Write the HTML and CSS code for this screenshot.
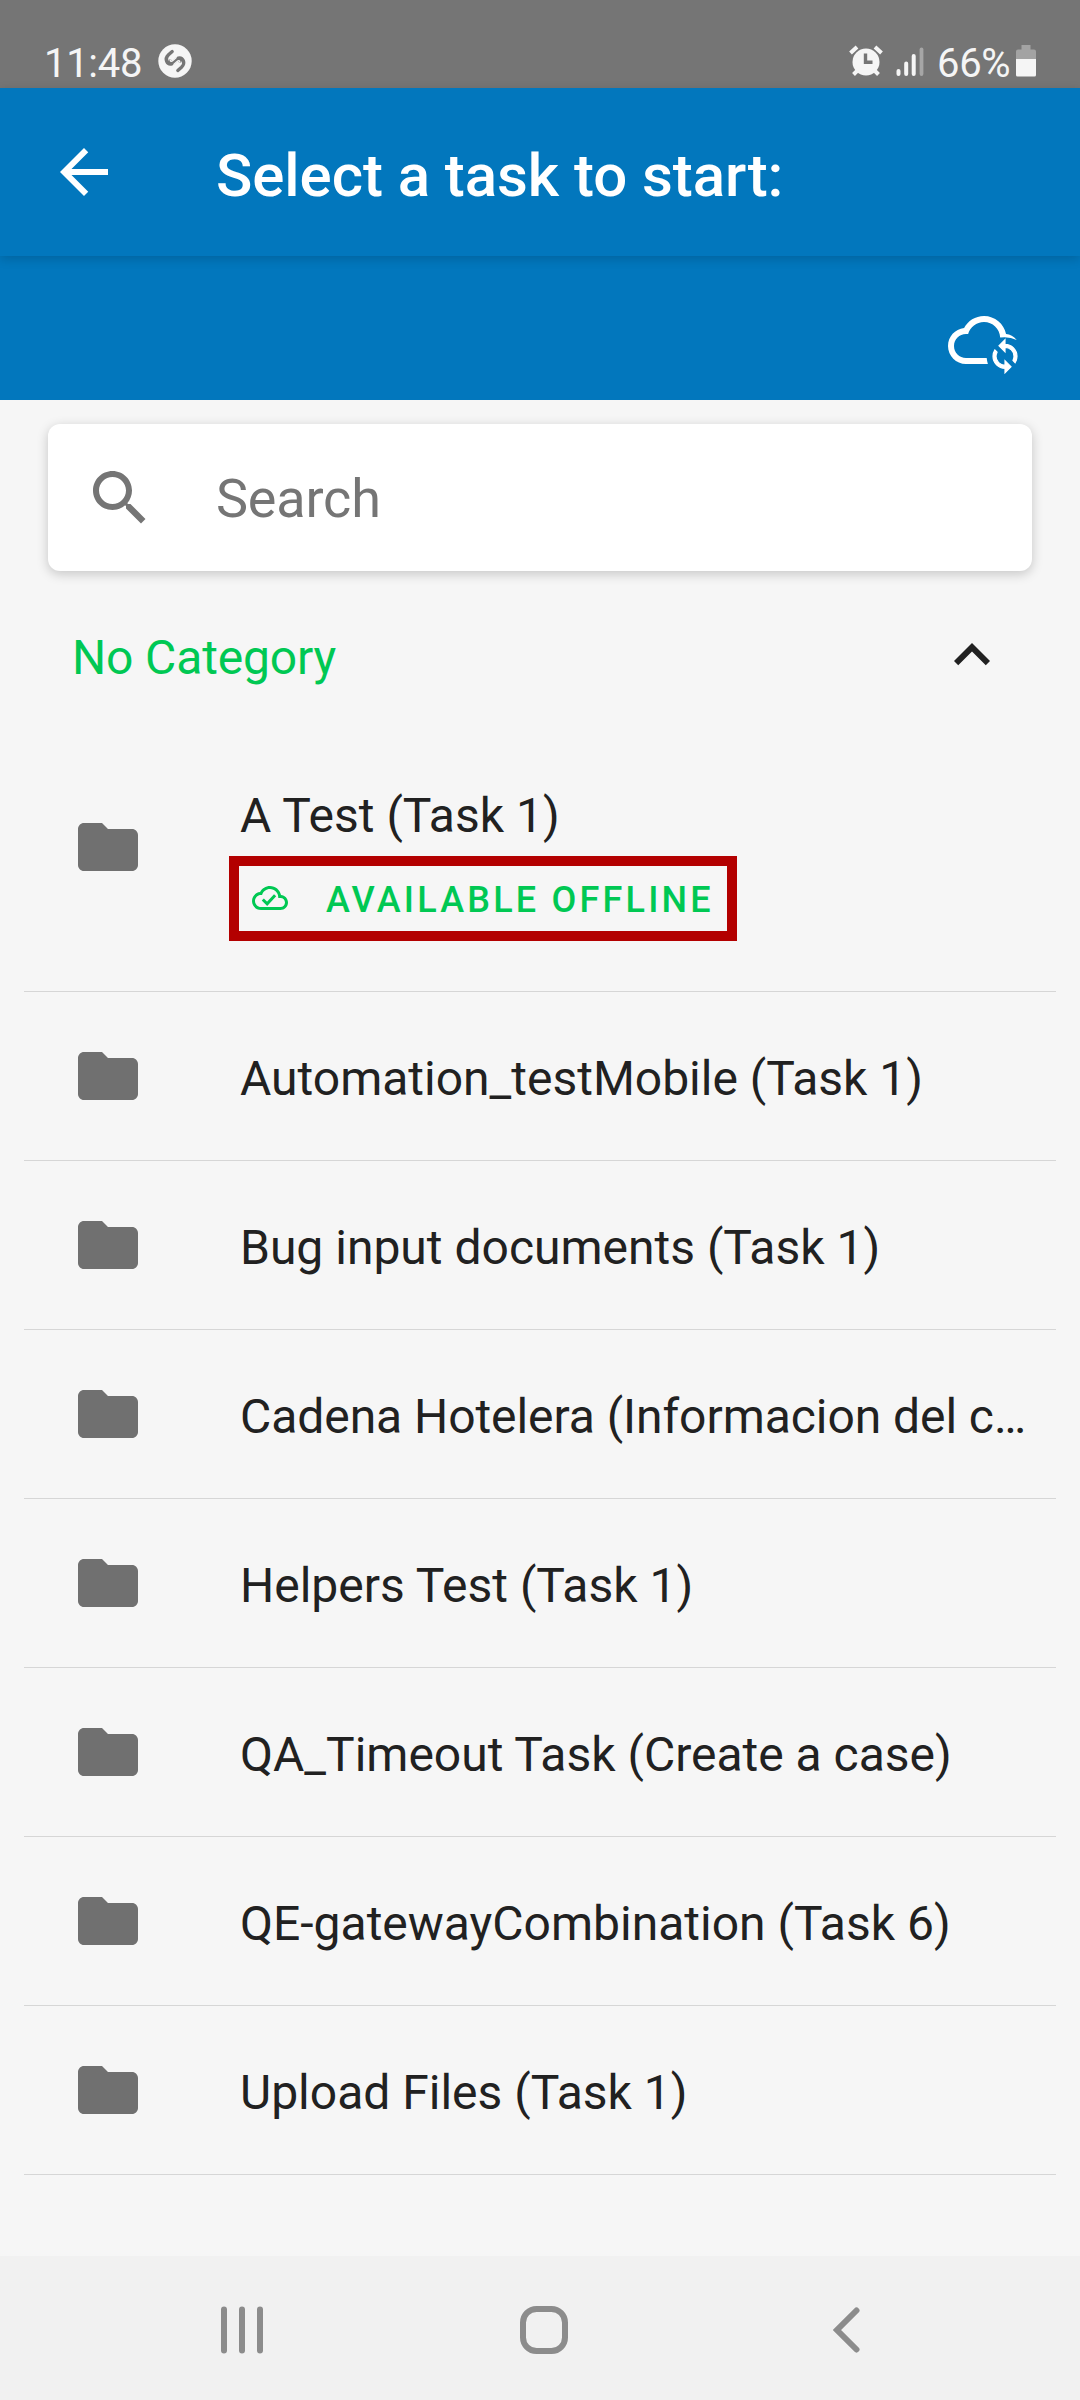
FILE: index.html
```html
<!DOCTYPE html>
<html lang="en">
<head>
<meta charset="utf-8">
<title>Select a task to start</title>
<link rel="stylesheet" href="styles.css">
</head>
<body>
<svg class="defs" width="0" height="0" aria-hidden="true">
  <symbol id="folder" viewBox="0 0 24 24"><path d="M10 4H4c-1.100 0-2 .9-2 2v12c0 1.100.9 2 2 2h16c1.100 0 2-.9 2-2V8c0-1.100-.9-2-2-2h-8z"/></symbol>
</svg>
<div class="screen">
  <div class="statusbar">
    <span class="clock">11:48</span>
    <svg class="notif" width="34" height="34" viewBox="0 0 34 34"><circle cx="17" cy="17" r="16.700" fill="#f5f5f5"/><path d="M14.200 7.500L10.500 10.800C6 15 9 21 13.800 20C15.500 19.600 17.500 17.500 18.500 16.500C20.500 14.700 22 15.500 22 17M19.800 26.500L23.500 23.200C28 19 25 13 20.200 14C18.500 14.400 16.500 16.500 15.500 17.500C13.500 19.300 12 18.500 12 17" fill="none" stroke="#757575" stroke-width="3.300" stroke-linecap="round"/><path d="M12.300 15.500C12 18.200 13.800 17.500 15.200 16.200L18.500 13.200" fill="none" stroke="#f5f5f5" stroke-width="1.400"/><path d="M21.700 18.500C22 15.800 20.200 16.500 18.800 17.800L15.500 20.800" fill="none" stroke="#f5f5f5" stroke-width="1.400"/></svg>
    <span class="spacer"></span>
    <svg class="alarm" width="34" height="32" viewBox="0 0 34 32"><g fill="none" stroke="#f5f5f5"><path d="M1.500 8L8 2M26 2L32.500 8" stroke-width="4"/><path d="M4.500 29.500L9 25M29.500 29.500L25 25" stroke-width="4"/></g><circle cx="17" cy="17" r="13.500" fill="#f5f5f5"/><path d="M16.500 8.500V17.300H23.500" fill="none" stroke="#757575" stroke-width="3.400"/></svg>
    <svg class="signal" width="28" height="32" viewBox="0 0 28 32"><g fill="none" stroke="#f5f5f5" stroke-width="4" stroke-linecap="round"><path d="M2.500 26V29M10.200 18.500V29M17.700 11V29"/><path d="M25.500 4.500V29" stroke="#a6a6a6" stroke-width="3.800"/></g></svg>
    <span class="percent">66%</span>
    <svg class="battery" width="20" height="32" viewBox="0 0 20 32"><path d="M5.500 0h9v4.500H18q2 0 2 2V14H0V6.500q0-2 2-2h3.500z" fill="#a3a3a3"/><path d="M0 14h20v16q0 1.500-1.500 1.500h-17Q0 31.500 0 30z" fill="#f5f5f5"/></svg>
  </div>
  <header class="appbar">
    <svg class="back" width="72" height="72" viewBox="0 0 24 24"><path d="M20 11H7.830l5.590-5.590L12 4l-8 8 8 8 1.410-1.410L7.830 13H20z" fill="#fff"/></svg>
    <h1>Select a task to start:</h1>
  </header>
  <div class="toolbar">
    <svg class="sync" width="72" height="60" viewBox="0 0 72 60" fill="#fff"><path transform="translate(0 -11) scale(3)" d="M12.900 18H6c-2.210 0-4-1.790-4-4s1.790-4 4-4h.71C7.370 7.690 9.480 6 12 6c2.900 0 5.200 2.200 5.400 5.200Q20.400 10.800 22.900 12C21.900 10.800 20.700 10.200 19.350 10.040 18.670 6.590 15.640 4 12 4 9.110 4 6.610 5.640 5.360 8.040 2.350 8.360 0 10.900 0 14c0 3.310 2.690 6 6 6h7.300Q13 19 12.900 18z"/><path transform="translate(39 23.300) scale(1.500)" stroke="#fff" stroke-width=".8" d="M12 4V1L8 5l4 4V6c3.310 0 6 2.690 6 6 0 1.010-.25 1.970-.7 2.800l1.460 1.460C19.540 15.030 20 13.570 20 12c0-4.420-3.580-8-8-8zm0 14c-3.310 0-6-2.690-6-6 0-1.010.25-1.970.7-2.800L5.240 7.740C4.460 8.970 4 10.430 4 12c0 4.420 3.580 8 8 8v3l4-4-4-4v3z"/></svg>
  </div>
  <main>
    <div class="search">
      <svg width="72" height="72" viewBox="0 0 24 24"><path d="M15.500 14h-.79l-.28-.27C15.410 12.590 16 11.110 16 9.500 16 5.910 13.090 3 9.500 3S3 5.910 3 9.500 5.910 16 9.500 16c1.610 0 3.090-.59 4.230-1.570l.27.28v.79l5 4.990L20.490 19zm-6 0C7.010 14 5 11.990 5 9.500S7.010 5 9.500 5 14 7.010 14 9.500 11.990 14 9.500 14z" fill="#757575"/></svg>
      <span>Search</span>
    </div>
    <div class="category">
      <span>No Category</span>
      <svg width="72" height="72" viewBox="0 0 24 24"><path d="M12 8l-6 6 1.410 1.410L12 10.830l4.590 4.580L18 14z" fill="#212121"/></svg>
    </div>
    <ul class="tasks">
      <li class="tall"><svg class="folder"><use href="#folder"/></svg><div class="body"><span class="name">A Test (Task 1)</span>
        <div class="offline"><svg width="36" height="36" viewBox="0 0 24 24"><path d="M19.350 10.040C18.670 6.590 15.640 4 12 4 9.110 4 6.610 5.640 5.360 8.040 2.350 8.360 0 10.900 0 14c0 3.310 2.690 6 6 6h13c2.760 0 5-2.240 5-5 0-2.640-2.050-4.780-4.650-4.960zM19 18H6c-2.210 0-4-1.790-4-4s1.790-4 4-4h.71C7.370 7.690 9.480 6 12 6c3.040 0 5.500 2.460 5.500 5.500v.5H19c1.660 0 3 1.340 3 3s-1.340 3-3 3z" fill="#00c853"/><path d="M7.200 13l2.900 2.900 5.300-5.700" fill="none" stroke="#00c853" stroke-width="2"/></svg><span>AVAILABLE OFFLINE</span></div></div></li>
      <li><svg class="folder"><use href="#folder"/></svg><span class="name">Automation_testMobile (Task 1)</span></li>
      <li><svg class="folder"><use href="#folder"/></svg><span class="name">Bug input documents (Task 1)</span></li>
      <li><svg class="folder"><use href="#folder"/></svg><span class="name clipped">Cadena Hotelera (Informacion del c…</span></li>
      <li><svg class="folder"><use href="#folder"/></svg><span class="name">Helpers Test (Task 1)</span></li>
      <li><svg class="folder"><use href="#folder"/></svg><span class="name">QA_Timeout Task (Create a case)</span></li>
      <li><svg class="folder"><use href="#folder"/></svg><span class="name">QE-gatewayCombination (Task 6)</span></li>
      <li><svg class="folder"><use href="#folder"/></svg><span class="name">Upload Files (Task 1)</span></li>
    </ul>
  </main>
  <nav class="navbar">
    <svg width="44" height="50" viewBox="0 0 44 50"><path d="M4 4.500V45.500M22 4.500V45.500M40 4.500V45.500" stroke="#8c8c8c" stroke-width="6" stroke-linecap="round"/></svg>
    <svg width="48" height="48" viewBox="0 0 48 48"><rect x="3" y="3" width="42" height="42" rx="13.500" fill="none" stroke="#8c8c8c" stroke-width="6"/></svg>
    <svg width="28" height="46" viewBox="0 0 28 46"><path d="M23.500 3.500L4 23L23.500 42.500" fill="none" stroke="#8c8c8c" stroke-width="6" stroke-linecap="round"/></svg>
  </nav>
</div>
</body>
</html>
```
FILE: styles.css
```css
* { box-sizing: border-box; }
body { margin: 0; background: #f5f5f5; font-family: Roboto, sans-serif; color: #212121; }
svg { display: block; flex: none; }
.defs { position: absolute; }
.screen { width: 1080px; height: 2400px; display: flex; flex-direction: column; background: #f6f6f6; }

.statusbar { height: 88px; flex: none; display: flex; align-items: flex-start; padding: 44px 44px 0; background: #757575; color: #f5f5f5; font-size: 40px; line-height: 40px; }
.clock { width: 98px; white-space: nowrap; letter-spacing: -.3px; }
.notif { margin-left: 16px; }
.spacer { flex: 1; }
.alarm { margin: 1px 13px 0 0; }
.signal { margin: 1px 13px 0 0; }
.percent { width: 74px; white-space: nowrap; margin-right: 5px; letter-spacing: -.3px; }
.battery { margin-top: 1px; }

.appbar { height: 168px; flex: none; display: flex; align-items: center; padding-left: 48px; background: #0277bd; color: #fff; position: relative; box-shadow: 0 3px 10px rgba(0, 0, 0, .16); }
.appbar h1 { margin: 7px 0 0 96px; font-size: 60px; font-weight: 500; line-height: 70px; letter-spacing: -.06px; }
.toolbar { height: 144px; flex: none; display: flex; justify-content: flex-end; padding: 59px 60px 0 0; background: #0277bd; }

main { flex: 1; padding-top: 24px; }
.search { height: 147px; margin: 0 48px; padding: 0 36px; display: flex; align-items: center; gap: 60px; border-radius: 12px; background: #fff; box-shadow: 0 3px 12px rgba(0, 0, 0, .2); font-size: 54px; letter-spacing: -.2px; color: #757575; }
.search span { padding-top: 2px; }
.category { height: 168px; padding: 0 72px; display: flex; align-items: center; justify-content: space-between; font-size: 48px; letter-spacing: -.15px; color: #00c853; }
.category span { padding-top: 5px; }

.tasks { list-style: none; margin: 0 24px; padding: 0; }
.tasks li { height: 169px; display: flex; align-items: center; padding-left: 48px; gap: 96px; border-bottom: 1px solid #d6d6d6; }
.tasks .tall { height: 253px; align-items: flex-start; }
.folder { width: 72px; height: 72px; fill: #707070; }
.tall .folder { margin-top: 72px; }
.name { display: block; font-size: 48px; line-height: 56px; padding-top: 6px; white-space: nowrap; }
.clipped { letter-spacing: -.06px; }
.tall .name { margin-top: 43px; }
.offline { width: 508px; height: 85px; margin: 12px 0 0 -11px; display: flex; align-items: center; padding-left: 13px; gap: 38px; border: 10px solid #b30000; color: #00c853; font-size: 36px; font-weight: 500; letter-spacing: 3.2px; white-space: nowrap; }
.offline svg { margin-bottom: 2px; }
.offline span { padding-top: 3px; }

.navbar { height: 144px; flex: none; display: flex; align-items: center; padding: 3px 0 0 220px; background: #f1f1f1; }
.navbar svg:nth-child(2) { margin-left: 256px; }
.navbar svg:nth-child(3) { margin-left: 265px; }
```
